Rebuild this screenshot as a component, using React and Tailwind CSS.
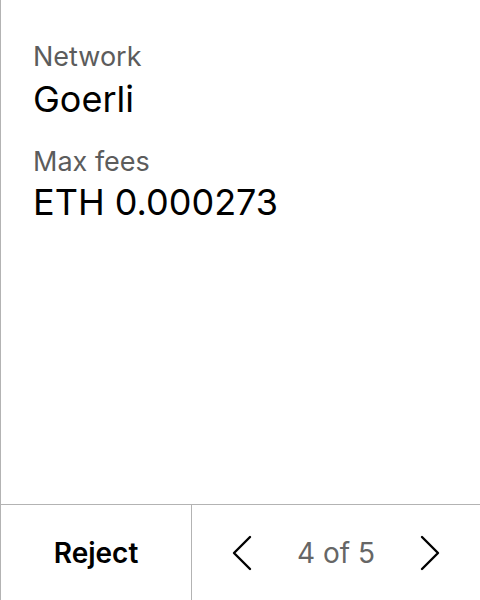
function Chevron({ dir }) {
    // chevron fino dibujado a mano, como el de la referencia
    const points = dir === 'left' ? '18,2 2,18 18,34' : '2,2 18,18 2,34';
    return (
        <svg width="20" height="36" viewBox="0 0 20 36" fill="none" stroke="black" strokeWidth="2.4" strokeLinecap="round" strokeLinejoin="round">
            <polyline points={points} />
        </svg>
    );
}

function App() {
    return (
        <div className="h-[600px] w-[480px] flex flex-col bg-white border-l border-[#b3b3b3]" style={{ fontFamily: 'Inter, "Noto Sans", sans-serif' }}>
            {/* detalle de la transacción */}
            <div className="flex-1 px-8 pt-[40px]">
                <div className="text-[27px] leading-[34px] text-[#5c5c5c]">Network</div>
                <div className="text-[36px] leading-[44px] text-black mt-[3px]">Goerli</div>
                <div className="text-[27px] leading-[34px] text-[#5c5c5c] mt-[24px]">Max fees</div>
                <div className="text-[36px] leading-[44px] text-black mt-[1px]">ETH 0.000273</div>
            </div>

            {/* barra inferior */}
            <div className="h-[96px] flex border-t border-[#b3b3b3]">
                <button className="w-[191px] border-r border-[#b3b3b3] flex items-center justify-center text-[28px] font-semibold text-black">
                    Reject
                </button>
                <div className="flex-1 flex items-center justify-center gap-[45px]">
                    <Chevron dir="left" />
                    <span className="text-[28px] text-[#666666]">4 of 5</span>
                    <Chevron dir="right" />
                </div>
            </div>
        </div>
    );
}

export default App;
